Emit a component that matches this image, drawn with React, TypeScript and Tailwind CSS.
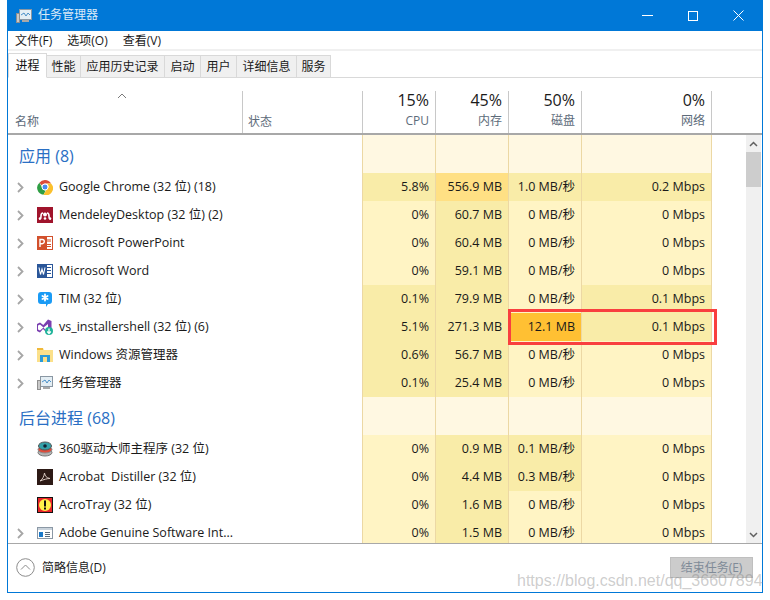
import React from 'react';

type Cellv = [string, string];
type Row = { name: string; icon: React.ReactNode; arrow: boolean; cpu: Cellv; mem: Cellv; disk: Cellv; net: Cellv };

const L = 'bg-[#fff4c4]';
const M = 'bg-[#f9eca8]';
const H = 'bg-[#ffe084]';
const O = 'bg-[#ffc033]';

const TaskIcon = () => (
  <svg width="16" height="16" viewBox="0 0 16 16">
    <rect x="3.5" y="1.5" width="12" height="10" fill="#e4eef4" stroke="#8a97a3" />
    <path d="M5 7l3-2 2 3 2-3 2 2" fill="none" stroke="#4a90c8" />
    <rect x="0.5" y="5.5" width="3" height="9" fill="#c9c9c9" stroke="#8f8f8f" />
    <rect x="6" y="12" width="7" height="2" fill="#a8a8a8" />
  </svg>
);

const Chrome = () => (
  <svg width="16" height="16" viewBox="0 0 16 16">
    <path d="M8 1a7 7 0 0 1 6.1 3.5H8a3.5 3.5 0 0 0-3.2 2L2.400 3.700A7 7 0 0 1 8 1z" fill="#dd4b39" />
    <path d="M2.400 3.700l3 5.200a3.500 3.500 0 0 0 3.400 2.500l-2.300 4.400A7 7 0 0 1 2.400 3.700z" fill="#2f9e44" />
    <path d="M14.100 4.500A7 7 0 0 1 6.500 15.800l3-5.100a3.500 3.500 0 0 0 .4-6.200z" fill="#fbc02d" />
    <circle cx="8" cy="8" r="3" fill="#4a8bf0" stroke="#fff" />
  </svg>
);

const Mendeley = () => (
  <svg width="16" height="16" viewBox="0 0 16 16">
    <rect width="16" height="16" fill="#a0142c" />
    <circle cx="8" cy="7.500" r="2" fill="#fff" />
    <path d="M2 12c2 0 2-1 2-3s1-3 2-3M14 12c-2 0-2-1-2-3s-1-3-2-3" fill="none" stroke="#fff" strokeWidth="1.600" />
    <circle cx="3" cy="11.500" r="1.300" fill="#fff" />
    <circle cx="8" cy="11.500" r="1.300" fill="#fff" />
    <circle cx="13" cy="11.500" r="1.300" fill="#fff" />
  </svg>
);

const Ppt = () => (
  <svg width="16" height="16" viewBox="0 0 16 16">
    <rect x="6" y="1.500" width="9.500" height="13" fill="#fff" stroke="#d2502c" />
    <rect x="10" y="4" width="4" height="3" fill="#e8a48c" />
    <rect x="10" y="9" width="4" height="1" fill="#d2502c" />
    <rect x="10" y="11" width="4" height="1" fill="#d2502c" />
    <rect x="0" y="1" width="10" height="14" fill="#d2502c" />
    <path d="M3 12V4.500h2.200a2 2 0 0 1 0 4.200H3" fill="none" stroke="#fff" strokeWidth="1.400" />
  </svg>
);

const Word = () => (
  <svg width="16" height="16" viewBox="0 0 16 16">
    <rect x="6" y="1.500" width="9.500" height="13" fill="#fff" stroke="#2a5699" />
    <rect x="10" y="4" width="4" height="1" fill="#2a5699" />
    <rect x="10" y="7" width="4" height="1" fill="#2a5699" />
    <rect x="10" y="10" width="4" height="1" fill="#2a5699" />
    <rect x="0" y="1" width="10" height="14" fill="#2a5699" />
    <path d="M2 4.500l1.500 7L5 6l1.500 5.500L8 4.500" fill="none" stroke="#fff" strokeWidth="1.100" />
  </svg>
);

const Tim = () => (
  <svg width="16" height="16" viewBox="0 0 16 16">
    <path d="M4 1h8a3 3 0 0 1 3 3v6a3 3 0 0 1-3 3h-1l-2 3v-3H4a3 3 0 0 1-3-3V4a3 3 0 0 1 3-3z" fill="#1a9bf5" />
    <path d="M8 3.500v6M5.400 5l5.200 3M10.600 5l-5.200 3" stroke="#fff" strokeWidth="1.800" strokeLinecap="round" />
  </svg>
);

const Vs = () => (
  <svg width="16" height="16" viewBox="0 0 16 16">
    <path d="M11 0.500l3.500 1.500v9h-3.500V5L6.500 8.500 3 5.500 1 6.500v4l2 1 3.500-3 4.500 5.500-1 0L6 10l-3 3.500L0 12V5l3-1.500L6.300 6z" fill="#7a3fb0" />
    <circle cx="12" cy="12" r="4" fill="#1fb39a" />
    <path d="M12 9.500v5M10.200 12.500L12 14.500l1.800-2" fill="none" stroke="#fff" strokeWidth="1.300" />
  </svg>
);

const Explorer = () => (
  <svg width="16" height="16" viewBox="0 0 16 16">
    <path d="M0 1h6l1 2h9v12H0z" fill="#fbe08a" />
    <rect x="0" y="1" width="6" height="2" fill="#f0b93a" />
    <rect x="3" y="8" width="10" height="2" fill="#2a9bd8" />
    <rect x="3" y="8" width="3" height="7" fill="#2a9bd8" />
    <rect x="10" y="8" width="3" height="7" fill="#2a9bd8" />
  </svg>
);

const Q360 = () => (
  <svg width="16" height="16" viewBox="0 0 16 16">
    <ellipse cx="8" cy="11.500" rx="7" ry="3.500" fill="#b5b5b5" stroke="#777" />
    <ellipse cx="8" cy="8.500" rx="7" ry="3.500" fill="#e04b3a" stroke="#8c8c8c" />
    <ellipse cx="8" cy="5" rx="6.500" ry="4" fill="#35a0a8" stroke="#555" />
    <circle cx="8" cy="5" r="1.800" fill="#123" />
  </svg>
);

const Acrobat = () => (
  <svg width="16" height="16" viewBox="0 0 16 16">
    <rect width="16" height="16" fill="#2d1a16" />
    <path d="M3 12c3-2 4-5 4.500-8 .5 3 2 5 5.500 5.500-3 0-6 1-10 2.500z" fill="none" stroke="#d8c8c0" strokeWidth="1" />
  </svg>
);

const AcroTray = () => (
  <svg width="16" height="16" viewBox="0 0 16 16">
    <rect width="16" height="16" fill="#111" />
    <rect x="1" y="1" width="14" height="14" fill="#e8242a" />
    <circle cx="8" cy="8" r="6" fill="#fff24a" />
    <rect x="7" y="3.500" width="2" height="6" fill="#111" />
    <rect x="7" y="10.500" width="2" height="2" fill="#111" />
  </svg>
);

const Adobe = () => (
  <svg width="16" height="16" viewBox="0 0 16 16">
    <rect x="0.500" y="2.500" width="15" height="11" fill="#fff" stroke="#8b98a5" />
    <rect x="1" y="3" width="14" height="2" fill="#c9d3dc" />
    <rect x="2" y="7" width="4" height="5" fill="#1a78c8" />
    <rect x="8" y="7" width="5" height="1" fill="#5a6a7a" />
    <rect x="8" y="9" width="5" height="1" fill="#5a6a7a" />
    <rect x="8" y="11" width="5" height="1" fill="#5a6a7a" />
  </svg>
);

const apps: Row[] = [
  { name: 'Google Chrome (32 位) (18)', icon: <Chrome />, arrow: true, cpu: ['5.8%', M], mem: ['556.9 MB', H], disk: ['1.0 MB/秒', M], net: ['0.2 Mbps', M] },
  { name: 'MendeleyDesktop (32 位) (2)', icon: <Mendeley />, arrow: true, cpu: ['0%', L], mem: ['60.7 MB', M], disk: ['0 MB/秒', L], net: ['0 Mbps', L] },
  { name: 'Microsoft PowerPoint', icon: <Ppt />, arrow: true, cpu: ['0%', L], mem: ['60.4 MB', M], disk: ['0 MB/秒', L], net: ['0 Mbps', L] },
  { name: 'Microsoft Word', icon: <Word />, arrow: true, cpu: ['0%', L], mem: ['59.1 MB', M], disk: ['0 MB/秒', L], net: ['0 Mbps', L] },
  { name: 'TIM (32 位)', icon: <Tim />, arrow: true, cpu: ['0.1%', M], mem: ['79.9 MB', M], disk: ['0 MB/秒', L], net: ['0.1 Mbps', M] },
  { name: 'vs_installershell (32 位) (6)', icon: <Vs />, arrow: true, cpu: ['5.1%', M], mem: ['271.3 MB', M], disk: ['12.1 MB', O], net: ['0.1 Mbps', M] },
  { name: 'Windows 资源管理器', icon: <Explorer />, arrow: true, cpu: ['0.6%', M], mem: ['56.7 MB', M], disk: ['0 MB/秒', L], net: ['0 Mbps', L] },
  { name: '任务管理器', icon: <TaskIcon />, arrow: true, cpu: ['0.1%', M], mem: ['25.4 MB', M], disk: ['0 MB/秒', L], net: ['0 Mbps', L] },
];

const bg: Row[] = [
  { name: '360驱动大师主程序 (32 位)', icon: <Q360 />, arrow: false, cpu: ['0%', L], mem: ['0.9 MB', M], disk: ['0.1 MB/秒', M], net: ['0 Mbps', L] },
  { name: 'Acrobat  Distiller (32 位)', icon: <Acrobat />, arrow: false, cpu: ['0%', L], mem: ['4.4 MB', M], disk: ['0.3 MB/秒', M], net: ['0 Mbps', L] },
  { name: 'AcroTray (32 位)', icon: <AcroTray />, arrow: false, cpu: ['0%', L], mem: ['1.6 MB', M], disk: ['0 MB/秒', L], net: ['0 Mbps', L] },
  { name: 'Adobe Genuine Software Int...', icon: <Adobe />, arrow: true, cpu: ['0%', L], mem: ['1.5 MB', M], disk: ['0 MB/秒', L], net: ['0 Mbps', L] },
];

const Cell = ({ w, v }: { w: string; v: Cellv }) => (
  <div className={`${w} ${v[1]} h-full border-r border-[#ecd8a4] flex items-center justify-end pr-[6px]`}>{v[0]}</div>
);

const ProcRow = ({ r }: { r: Row }) => (
  <div className="flex h-[28px] text-[12.5px] leading-[16px] text-[#1a1a1a]">
    <div className="w-[355px] h-full border-r border-[#ecd8a4] flex items-center">
      <div className="w-[11px] ml-[7px] flex justify-center">
        {r.arrow && (
          <svg width="7" height="11" viewBox="0 0 7 11"><path d="M1 1l4.500 4.500L1 10" fill="none" stroke="#a6a6a6" strokeWidth="1.800" /></svg>
        )}
      </div>
      <div className="ml-[11px] w-[16px] h-[16px] shrink-0">{r.icon}</div>
      <div className="ml-[6px] whitespace-pre">{r.name}</div>
    </div>
    <Cell w="w-[73px]" v={r.cpu} />
    <Cell w="w-[73px]" v={r.mem} />
    <Cell w="w-[73px]" v={r.disk} />
    <Cell w="w-[130px]" v={r.net} />
  </div>
);

const GroupRow = ({ t }: { t: string }) => (
  <div className="flex h-[38px]">
    <div className="w-[355px] h-full border-r border-[#ecd8a4] pl-[11px] pt-[9px] text-[16px] leading-[24px] text-[#2a6fc4]">{t}</div>
    {['w-[73px]', 'w-[73px]', 'w-[73px]', 'w-[130px]'].map((w, i) => (
      <div key={i} className={`${w} h-full bg-[#fff8e2] border-r border-[#ecd8a4]`} />
    ))}
  </div>
);

const HeadCol = ({ w, pct, label }: { w: string; pct: string; label: string }) => (
  <div className={`${w} h-full border-r border-[#c8c8c8] flex flex-col items-end pr-[6px]`}>
    <div className="text-[16px] leading-[20px] mt-[-1px] text-[#1a1a1a]">{pct}</div>
    <div className="text-[12px] leading-[16px] mt-[3px] text-[#5d6b7a]">{label}</div>
  </div>
);

const tabs: [string, string][] = [
  ['性能', 'w-[34px]'],
  ['应用历史记录', 'w-[84px]'],
  ['启动', 'w-[36px]'],
  ['用户', 'w-[36px]'],
  ['详细信息', 'w-[60px]'],
  ['服务', 'w-[34px]'],
];

export default function App() {
  return (
    <div className="relative w-[770px] h-[600px] bg-white overflow-hidden font-['Open_Sans','Noto_Sans_CJK_SC',sans-serif]">
      <div className="ml-[7px] w-[756px] h-[593px] border border-[#0078d7] border-t-0 flex flex-col">
        <div className="h-[31px] shrink-0 bg-[#0078d7] flex items-center text-white">
          <div className="ml-[8px] w-[16px] h-[16px]"><TaskIcon /></div>
          <div className="ml-[6px] mt-[-1px] text-[12px] text-[#dceaf7]">任务管理器</div>
          <div className="ml-auto flex items-center mr-[18px] gap-[35px]">
            <svg width="11" height="11" viewBox="0 0 11 11"><path d="M0 5.500h11" stroke="#fff" /></svg>
            <svg width="10" height="10" viewBox="0 0 10 10"><rect x="0.500" y="0.500" width="9" height="9" fill="none" stroke="#fff" /></svg>
            <svg width="11" height="11" viewBox="0 0 11 11"><path d="M0.500 0.500l10 10M10.500 0.500l-10 10" stroke="#fff" /></svg>
          </div>
        </div>
        <div className="h-[20px] pt-[2px] shrink-0 flex items-center text-[12px] text-[#1a1a1a] border-b-2 border-[#f0f0f0]">
          <span className="ml-[7px]">文件(F)</span>
          <span className="ml-[15px]">选项(O)</span>
          <span className="ml-[15px]">查看(V)</span>
        </div>
        <div className="h-[27px] shrink-0 flex items-end border-b border-[#d9d9d9] text-[12px] text-[#1a1a1a]">
          <div className="w-[39px] h-[25px] mb-[-1px] bg-white border border-[#d9d9d9] border-b-white flex items-center justify-center text-[#111]">进程</div>
          {tabs.map(([t, w]) => (
            <div key={t} className={`${w} h-[23px] mb-[-1px] bg-[#f0f0f0] border border-[#d9d9d9] border-l-0 flex items-center justify-center`}>{t}</div>
          ))}
        </div>
        <div className="h-[57px] shrink-0 border-b-2 border-[#a8a8a8] flex items-end">
          <div className="flex h-[42px] w-full">
            <div className="w-[235px] h-full border-r border-[#c8c8c8] relative">
              <svg className="absolute left-[109px] top-[2px]" width="10" height="6" viewBox="0 0 10 6"><path d="M1 5l4-4 4 4" fill="none" stroke="#7a7a7a" /></svg>
              <div className="absolute left-[7px] bottom-[3px] text-[12px] leading-[16px] text-[#5d6b7a]">名称</div>
            </div>
            <div className="w-[120px] h-full border-r border-[#c8c8c8] relative">
              <div className="absolute left-[5px] bottom-[3px] text-[12px] leading-[16px] text-[#5d6b7a]">状态</div>
            </div>
            <HeadCol w="w-[73px]" pct="15%" label="CPU" />
            <HeadCol w="w-[73px]" pct="45%" label="内存" />
            <HeadCol w="w-[73px]" pct="50%" label="磁盘" />
            <HeadCol w="w-[130px]" pct="0%" label="网络" />
          </div>
        </div>
        <div className="h-[408px] shrink-0 flex overflow-hidden">
          <div className="w-[738px] shrink-0">
            <GroupRow t="应用 (8)" />
            {apps.map((r) => <ProcRow key={r.name} r={r} />)}
            <GroupRow t="后台进程 (68)" />
            {bg.map((r) => <ProcRow key={r.name} r={r} />)}
          </div>
          <div className="w-[15px] h-full bg-[#f0f0f0] flex flex-col justify-between">
            <div className="w-full">
              <div className="h-[17px] flex items-center justify-center">
                <svg width="9" height="6" viewBox="0 0 9 6"><path d="M1 5l3.500-3.500L8 5" fill="none" stroke="#606060" strokeWidth="1.500" /></svg>
              </div>
              <div className="h-[35px] bg-[#cdcdcd]" />
            </div>
            <div className="h-[16px] flex items-center justify-center">
              <svg width="9" height="6" viewBox="0 0 9 6"><path d="M1 1l3.500 3.500L8 1" fill="none" stroke="#606060" strokeWidth="1.500" /></svg>
            </div>
          </div>
        </div>
        <div className="flex-1 border-t border-[#a8a8a8] flex items-center pb-[1px] relative">
          <svg className="ml-[8px]" width="19" height="19" viewBox="0 0 19 19">
            <circle cx="9.500" cy="9.500" r="8.800" fill="none" stroke="#8c8c8c" />
            <path d="M5 11.500l4.500-4.500 4.500 4.500" fill="none" stroke="#8c8c8c" />
          </svg>
          <span className="ml-[7px] text-[12px] text-[#1a1a1a]">简略信息(D)</span>
          <div className="absolute right-[9px] top-[13px] w-[83px] h-[21px] bg-[#cccccc] border border-[#bfbfbf] flex items-center justify-center text-[12px] text-[#808b98]">结束任务(E)</div>
        </div>
      </div>
      <div className="absolute left-[508px] top-[309px] w-[209px] h-[36px] border-[3px] border-[#f93f3f]" />
      <div className="absolute left-[517px] top-[570px] text-[16px] leading-[22px] text-[#808080]/40 font-['Liberation_Sans'] whitespace-nowrap">https://blog.csdn.net/qq_36607894</div>
    </div>
  );
}
